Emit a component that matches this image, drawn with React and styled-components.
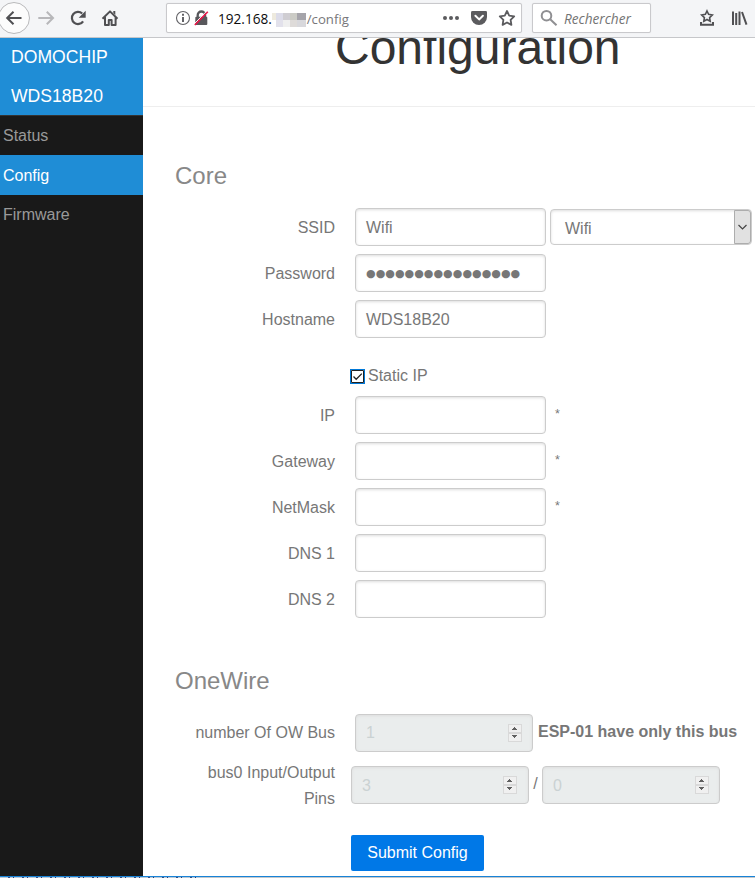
import React from "react";
import styled, { createGlobalStyle } from "styled-components";

const GlobalStyle = createGlobalStyle`
  *, *::before, *::after { box-sizing: border-box; }
  body { margin: 0; overflow: hidden; background: #fff; }
`;

const Window = styled.div`
  width: 755px;
  height: 878px;
  display: flex;
  flex-direction: column;
  overflow: hidden;
  font: 16px/26px "Liberation Sans", Arial, sans-serif;
  color: #777;
`;

const Toolbar = styled.header`
  flex: none;
  display: flex;
  height: 38px;
  padding-top: 3px;
  background: #f4f5f7;
  border-bottom: 1px solid #c6c7ca;
  font-family: "Open Sans", "Noto Sans", sans-serif;
`;

const NavIcons = styled.div`
  width: 166px;
  height: 32px;
  margin-top: -2px;
`;

const Field = styled.div`
  display: flex;
  align-items: center;
  width: ${(p) => p.$width}px;
  height: 30px;
  margin-right: ${(p) => p.$gap || 0}px;
  background: #fff;
  border: 1px solid #c9c9cc;
  border-radius: 2px;
  box-shadow: 0 0 1px rgba(0, 0, 0, 0.12);
`;

const AddressText = styled.div`
  display: flex;
  align-items: center;
  width: 222px;
  height: 28px;
  padding: 2px 0 0 7px;
  font-size: 13.6px;
  line-height: 20px;
  color: #0c0c0d;
`;

const AddressPath = styled.span`
  font-size: 13.2px;
  color: #77777a;
`;

const Mosaic = styled.span`
  display: grid;
  grid-template-columns: 4px 7px 7px 7px 9px;
  grid-template-rows: 7px 7px;
  margin-top: 1px;
  margin-right: 1px;
`;

const Tile = styled.i`
  background: ${(p) => p.$tone};
`;

const SearchText = styled.span`
  padding: 2px 0 0 5px;
  font-size: 13.6px;
  line-height: 20px;
  font-style: italic;
  color: #737373;
`;

const Viewport = styled.div`
  display: flex;
  height: 838px;
  overflow: hidden;
`;

const Sidebar = styled.nav`
  flex: none;
  width: 143px;
  background: #191919;
`;

const Brand = styled.div`
  height: 78px;
  padding-left: 11px;
  background: #1f8dd6;
  border-bottom: 1px solid #333;
  color: #fff;
  font-size: 17.6px;
  line-height: 39px;
`;

const MenuItem = styled.div`
  height: ${(p) => (p.$active ? 40 : 39)}px;
  padding-left: 3px;
  line-height: ${(p) => (p.$active ? 41 : 39)}px;
  background: ${(p) => (p.$active ? "#1f8dd6" : "transparent")};
  color: ${(p) => (p.$active ? "#fff" : "#999")};
`;

const Page = styled.main`
  flex: 1;
  min-width: 0;
`;

const PageHeader = styled.div`
  display: flex;
  height: 69px;
  padding-left: 192px;
  border-bottom: 1px solid #eee;
`;

const Title = styled.h1`
  margin: -18px 0 0;
  font-size: 48px;
  line-height: 56px;
  font-weight: 300;
  color: #333;
`;

const Form = styled.form`
  padding: 53px 0 0 32px;
`;

const SectionTitle = styled.h2`
  height: 32px;
  margin: 0 0 ${(p) => p.$gap}px;
  font-size: 24px;
  line-height: 32px;
  font-weight: 300;
  color: #888;
`;

const Row = styled.div`
  display: flex;
  height: 38px;
  margin-bottom: ${(p) => p.$gap ?? 8}px;
`;

const Label = styled.label`
  width: 160px;
  margin: ${(p) => (p.$lines === 2 ? "-6px 16px 0 0" : "0 20px 0 0")};
  text-align: right;
  line-height: ${(p) => (p.$lines === 2 ? 26 : p.$tight ? 38 : 40)}px;
`;

const InputBox = styled.div`
  position: relative;
  width: ${(p) => p.$width || 191}px;
  height: 38px;
  padding: 0 10px;
  border: 1px solid #ccc;
  border-radius: 4px;
  box-shadow: inset 0 1px 3px #ddd;
  background: ${(p) => (p.$disabled ? "#eaeded" : "#fff")};
  color: ${(p) => (p.$disabled ? "#cad2d3" : "#777")};
  line-height: ${(p) => p.$line || 37}px;
  white-space: nowrap;
`;

const Dots = styled.span`
  display: block;
  font-family: "DejaVu Sans", sans-serif;
  font-size: 11px;
  letter-spacing: 0.04px;
  line-height: 38px;
`;

const SelectBox = styled.div`
  display: flex;
  justify-content: space-between;
  width: 202px;
  height: 36px;
  margin: 1px 0 0 4px;
  padding-left: 14px;
  border: 1px solid #ccc;
  border-radius: 4px;
  box-shadow: inset 0 1px 3px #ddd;
  line-height: 37px;
`;

const SelectArrow = styled.span`
  display: flex;
  align-items: center;
  justify-content: center;
  width: 17px;
  background: #e1e1e1;
  border: 1px solid #adadad;
  border-radius: 0 3px 3px 0;
`;

const Required = styled.span`
  margin-left: 9px;
  font-size: 12.5px;
  line-height: 36px;
`;

const CheckRow = styled.div`
  display: flex;
  align-items: center;
  height: 26px;
  margin: 24px 0 8px 175px;
`;

const CheckText = styled.span`
  padding-top: 2px;
`;

const CheckBox = styled.span`
  display: flex;
  width: 15px;
  height: 15px;
  margin: 2px 3px 0 0;
  border: 1px solid #0078d7;
  background: #fff;
`;

const SpinnerBox = styled.span`
  position: absolute;
  right: ${(p) => p.$inset}px;
  top: 9px;
  display: flex;
`;

const Note = styled.b`
  margin-left: 5px;
  line-height: 36px;
  white-space: nowrap;
`;

const Slash = styled.span`
  width: 13px;
  text-align: center;
  line-height: 36px;
`;

const Submit = styled.button`
  display: block;
  width: 133px;
  height: 36px;
  margin: 31px 0 0 176px;
  padding: 0;
  border: 0;
  border-radius: 2px;
  background: #0078e7;
  color: #fff;
  font: inherit;
  line-height: 34px;
`;

const WindowEdge = styled.footer`
  height: 2px;
  border-top: 1px solid #1883d7;
  background: repeating-linear-gradient(90deg, #b9c9d8 0 8px, #324f86 8px 10px, #b9c9d8 10px 13px, #263b78 13px 14px) 0 0 / 202px 1px no-repeat, #c4c8cc;
`;

function NavigationDrawing() {
  return (
    <NavIcons>
      <svg width="166" height="34" viewBox="0 1 166 34" fill="none">
        <circle cx="14" cy="18" r="15.5" fill="#fcfcfc" stroke="#b9b9bb" />
        <path d="M21.5 18H8M13.5 11.8L7.2 18l6.3 6.2" stroke="#505053" strokeWidth="2" />
        <path d="M38.3 18h14M46.8 11.8L53 18l-6.2 6.2" stroke="#b7b7ba" strokeWidth="2" />
        <path d="M83.1 21.3A6.1 6.1 0 1 1 82.2 13.5" stroke="#505053" strokeWidth="2.2" />
        <path d="M85.7 10.8v7h-7z" fill="#505053" />
        <path d="M102.5 18.8l7.5-7.4 7.5 7.4M105 17v8h3.8v-5h2.8v5h4v-8" stroke="#505053" strokeWidth="2" strokeLinejoin="round" />
        <path d="M113.3 11h2v4l-2-2z" fill="#505053" />
      </svg>
    </NavIcons>
  );
}

function SecurityDrawing() {
  return (
    <svg width="44" height="28" viewBox="167 4 44 28" fill="none">
      <circle cx="183" cy="18" r="6.5" stroke="#626266" strokeWidth="1.1" />
      <path d="M183 17v5M183 13.7v2" stroke="#626266" strokeWidth="2" />
      <path d="M197.7 18v-2.8a3.7 3.7 0 0 1 7.4 0V18" stroke="#58585c" strokeWidth="2.3" />
      <rect x="195.3" y="16.7" width="12" height="8.3" rx="1" fill="#58585c" />
      <path d="M194 24.1L207 10.8" stroke="#fff" strokeWidth="1" />
      <path d="M194.8 25L207.8 11.7" stroke="#ed1448" strokeWidth="1.6" />
    </svg>
  );
}

function AddressActions() {
  return (
    <svg width="88" height="28" viewBox="433 4 88 28" fill="none">
      <g fill="#5b5b5e">
        <circle cx="445" cy="18" r="2" />
        <circle cx="451" cy="18" r="2" />
        <circle cx="457" cy="18" r="2" />
        <path d="M472.5 11h13.2q1.3 0 1.3 1.3V17a8 8 0 0 1-16 0v-4.7q0-1.3 1.5-1.3z" />
      </g>
      <path d="M475.4 15.8l3.7 3.6 3.8-3.6" stroke="#fff" strokeWidth="2" strokeLinecap="round" strokeLinejoin="round" />
      <path d="M507 11l2.2 4.7 5 .7-3.6 3.5.8 5-4.4-2.4-4.4 2.4.8-5-3.6-3.5 5-.7z" stroke="#5b5b5e" strokeWidth="1.8" strokeLinejoin="round" />
    </svg>
  );
}

function SearchDrawing() {
  return (
    <svg width="26" height="28" viewBox="533 4 26 28" fill="none">
      <circle cx="546.5" cy="15.7" r="4.8" stroke="#8f8f92" strokeWidth="2" />
      <path d="M550.2 19.2l6.3 6" stroke="#8f8f92" strokeWidth="2" />
    </svg>
  );
}

function LibraryDrawing() {
  return (
    <svg width="104" height="30" viewBox="651 3 104 30" fill="none">
      <path d="M707 11l1.6 3.4 3.7.6-2.7 2.6.6 3.7-3.2-1.8-3.2 1.8.6-3.7-2.7-2.6 3.7-.6z" stroke="#505053" strokeWidth="1.6" />
      <path d="M701 22v2.8h12V22" stroke="#505053" strokeWidth="2" />
      <path d="M733 11.5V25M736.2 13V25M739.5 11.5V25M742 12l4.5 12.6" stroke="#505053" strokeWidth="2" />
    </svg>
  );
}

function NumberInput({ value, inset = 10, line }) {
  return (
    <InputBox $disabled $width={178} $line={line}>
      {value}
      <SpinnerBox $inset={inset}>
        <svg width="14" height="18" viewBox="0 0 14 18" shapeRendering="crispEdges">
          <path d="M.5 .5h13v8h-13zM.5 9.5h13v8h-13z" fill="#f0f0f0" stroke="#d9d9d9" />
          <path d="M4 6h5V5H8V4H7V3H6v1H5v1H4zM4 11h5v1H8v1H7v1H6v-1H5v-1H4z" fill="#606060" />
        </svg>
      </SpinnerBox>
    </InputBox>
  );
}

const tiles = ["#eeeade", "#dcdce9", "#cfcdd2", "#cbcbc5", "#a5a4aa", "#fff", "#e2e1eb", "#efefef", "#dedbd9", "#d8d8dc"];

const addressRows = [
  { label: "IP", required: true },
  { label: "Gateway", required: true },
  { label: "NetMask", required: true },
  { label: "DNS 1" },
  { label: "DNS 2", gap: 47 },
];

export default function App() {
  return (
    <Window>
      <GlobalStyle />
      <Toolbar>
        <NavigationDrawing />
        <Field $width={356} $gap={10}>
          <SecurityDrawing />
          <AddressText>
            192.168.
            <Mosaic>
              {tiles.map((tone, i) => <Tile key={i} $tone={tone} />)}
            </Mosaic>
            <AddressPath>/config</AddressPath>
          </AddressText>
          <AddressActions />
        </Field>
        <Field $width={119}>
          <SearchDrawing />
          <SearchText>Rechercher</SearchText>
        </Field>
        <LibraryDrawing />
      </Toolbar>
      <Viewport>
        <Sidebar>
          <Brand>DOMOCHIP<br />WDS18B20</Brand>
          <MenuItem>Status</MenuItem>
          <MenuItem $active>Config</MenuItem>
          <MenuItem>Firmware</MenuItem>
        </Sidebar>
        <Page>
          <PageHeader><Title>Configuration</Title></PageHeader>
          <Form>
            <SectionTitle $gap={16}>Core</SectionTitle>
            <Row>
              <Label>SSID</Label>
              <InputBox>Wifi</InputBox>
              <SelectBox>
                Wifi
                <SelectArrow>
                  <svg width="9" height="6" viewBox="0 0 9 6" fill="none">
                    <path d="M.5 1l4 4 4-4" stroke="#444" strokeWidth="1.2" />
                  </svg>
                </SelectArrow>
              </SelectBox>
            </Row>
            <Row>
              <Label>Password</Label>
              <InputBox><Dots>●●●●●●●●●●●●●●●●</Dots></InputBox>
            </Row>
            <Row>
              <Label>Hostname</Label>
              <InputBox>WDS18B20</InputBox>
            </Row>
            <CheckRow>
              <CheckBox>
                <svg width="13" height="13" viewBox="0 0 13 13" fill="none">
                  <path d="M.5 .5h12v12H.5z" stroke="#222" />
                  <path d="M2.5 6.5l2.7 2.8L10.8 3.6" stroke="#222" strokeWidth="1.3" />
                </svg>
              </CheckBox>
              <CheckText>Static IP</CheckText>
            </CheckRow>
            {addressRows.map(({ label, required, gap }) => (
              <Row key={label} $gap={gap}>
                <Label>{label}</Label>
                <InputBox />
                {required && <Required>*</Required>}
              </Row>
            ))}
            <SectionTitle $gap={17}>OneWire</SectionTitle>
            <Row $gap={14}>
              <Label $tight>number Of OW Bus</Label>
              <NumberInput value="1" line={35} />
              <Note>ESP-01 have only this bus</Note>
            </Row>
            <Row $gap={0}>
              <Label $lines={2}>bus0 Input/Output Pins</Label>
              <NumberInput value="3" inset={11} />
              <Slash>/</Slash>
              <NumberInput value="0" />
            </Row>
            <Submit type="button">Submit Config</Submit>
          </Form>
        </Page>
      </Viewport>
      <WindowEdge />
    </Window>
  );
}
